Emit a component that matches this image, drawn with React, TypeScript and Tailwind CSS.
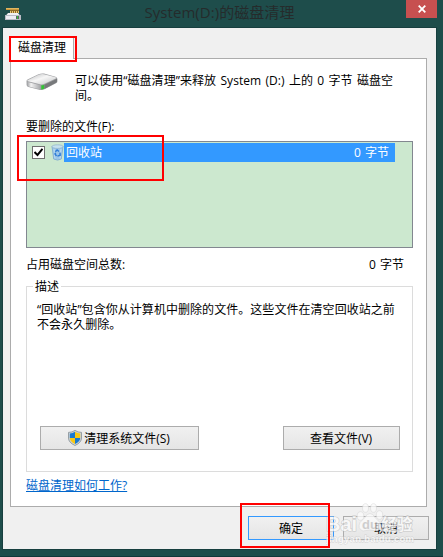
import React from 'react';

const yahei = 'font-["Open_Sans","Noto_Sans_CJK_SC",sans-serif]';

function CleanupIcon() {
  return (
    <svg viewBox="0 0 16 12" className="block h-[12px] w-[16px]">
      <path d="M1 0h13v2H1z" fill="#c9973c" />
      <path d="M1 0h13v1H1z" fill="#e0b660" />
      <path d="M5 2h9v3H5z" fill="#8d6a27" />
      <path d="M5.500 3v2M7.500 3v2M9.500 3v2M11.500 3v2M13.500 3v2" stroke="#ecc872" strokeWidth="1" />
      <path d="M3 5h10l2.500 3H.500z" fill="#f1f1f3" />
      <path d="M0 7h16v5H0z" fill="#b9bbc4" />
      <path d="M1 8h10v3H1z" fill="#ededf3" />
      <path d="M11 8h3v3h-3z" fill="#5d6266" />
      <path d="M12 8h1v3h-1z" fill="#35c23a" />
    </svg>
  );
}

function DriveIcon() {
  return (
    <svg viewBox="0 0 32 18" className="block h-[18px] w-[32px]">
      <defs>
        <linearGradient id="top" x1="0" y1="0" x2="1" y2="1">
          <stop offset="0" stopColor="#b9babc" />
          <stop offset=".45" stopColor="#f6f6f6" />
          <stop offset="1" stopColor="#c5c6c8" />
        </linearGradient>
        <linearGradient id="front" x1="0" y1="0" x2="1" y2="0">
          <stop offset="0" stopColor="#9c9da0" />
          <stop offset=".3" stopColor="#f2f2f2" />
          <stop offset="1" stopColor="#a5a6a9" />
        </linearGradient>
      </defs>
      <path d="M.5 8Q.500 7 2 6.300L12.500 1.300Q15 .2 18 .6l11.500 3.100Q31.500 4.400 31.400 6v2.500q0 1-1.400 1.700L18.500 16.200Q16.500 17.300 14 16.900L2.500 14Q.6 13.400.6 12z" fill="#a0a1a4" />
      <path d="M1.500 7.200 12.500 1.800Q15 .8 18 1.200l11.500 3q1.400.5.3 1.200L18.500 10.800Q16.500 11.800 14 11.200L2 8.300Q.800 7.800 1.500 7.200z" fill="url(#top)" />
      <path d="M1 8.600q.5.500 1.500.7l12 2.900V16.500L2.600 13.500Q1 13 1 12z" fill="url(#front)" />
      <path d="M18.300 11.800 31 5.700v2.900q0 .6-1 1.200L18.300 15.900z" fill="#77797b" />
      <path d="M15.300 12.200q1.600 0 2.900-.5v4.100q-1.200.7-2.900.6z" fill="#32c433" />
    </svg>
  );
}

function BinIcon() {
  return (
    <svg viewBox="0 0 13 17" className="block h-[17px] w-[13px]">
      <path d="M1 2.500 2.700 15q3.800 2.200 7.600 0L12 2.500z" fill="#9cc6e8" stroke="#7aa8d0" strokeWidth=".8" />
      <path d="m3 5 1 9.500M10 5 9 14.500" stroke="#c4e1f3" strokeWidth=".9" />
      <ellipse cx="6.5" cy="2.600" rx="5.600" ry="1.800" fill="#c6e2ef" stroke="#8fb0c9" strokeWidth=".7" />
      <path d="m4.300 7.800 1.800-1.800L8 7.500M9 8.600l.2 2.600-2.800.9M5.500 12 4 10l.6-1.300" fill="none" stroke="#2f7cd6" strokeWidth="1.500" />
    </svg>
  );
}

function ShieldIcon() {
  return (
    <svg viewBox="0 0 14 16" className="block h-[16px] w-[14px]">
      <path d="M7 .4Q10 2.500 13.500 2.400V8q0 4.500-6.500 7.500Q.5 12.500.5 8V2.400Q4 2.500 7 .4z" fill="#cfd5d8" stroke="#838d94" strokeWidth=".8" />
      <path d="M7 1.800Q4.800 3.400 1.800 3.400V8H7z" fill="#1979cf" />
      <path d="M7 1.800Q9.200 3.400 12.200 3.400V8H7z" fill="#f9c812" />
      <path d="M1.800 8H7v6.100Q1.800 11.500 1.800 8z" fill="#f9c812" />
      <path d="M12.200 8H7v6.100Q12.200 11.500 12.200 8z" fill="#1979cf" />
    </svg>
  );
}

interface DialogButtonProps {
  className: string;
  children: React.ReactNode;
}

function DialogButton({ className, children }: DialogButtonProps) {
  return (
    <button
      className={`flex h-6 items-center justify-center border bg-gradient-to-b from-[#f0f0f0] to-[#e5e5e5] ${className}`}
    >
      {children}
    </button>
  );
}

function Watermark() {
  return (
    <div className="pointer-events-none absolute left-[326px] top-[503px] z-10 h-[43px] w-[90px] opacity-75">
      <svg viewBox="0 0 90 43" className="block h-[43px] w-[90px] fill-[#fbfbfb] font-['Liberation_Sans','Noto_Sans_CJK_SC',sans-serif] font-bold">
        <g stroke="#d2d2d2" strokeWidth=".6">
          <ellipse cx="34.500" cy="13" rx="3.300" ry="4.300" />
          <ellipse cx="39.500" cy="5" rx="3" ry="4.300" />
          <ellipse cx="47.500" cy="5" rx="3" ry="4.300" />
          <ellipse cx="53.500" cy="12" rx="3.200" ry="4.300" />
          <path d="M44 10.500q3 0 5 4l5 5q3 6-3 8.500-7-2-14 0-6-2.500-3-8.500l5-5q2-4 5-4z" />
        </g>
        <text x="0" y="27.500" fontSize="21" textLength="31" lengthAdjust="spacingAndGlyphs" stroke="#bdbdbd" strokeWidth="1.200" paintOrder="stroke">Bai</text>
        <text x="36" y="26" fontSize="13" fill="#c4c4c4">du</text>
        <text x="55.500" y="27" fontSize="15.500" textLength="31" stroke="#bdbdbd" strokeWidth="1.200" paintOrder="stroke">经验</text>
        <text x="0" y="38.500" fontSize="9.500" textLength="88" stroke="#c8c8c8" strokeWidth=".8" paintOrder="stroke">jingyan.baidu.com</text>
      </svg>
    </div>
  );
}

export default function App() {
  return (
    <div className={`relative h-[557px] w-[443px] overflow-hidden border-b border-[#12383a] bg-[#1e4d4b] text-xs leading-[15px] text-black ${yahei}`}>
      {/* Title bar */}
      <header className="flex h-7 items-start">
        <div className="w-[108px] pl-[5px] pt-[8px]">
          <CleanupIcon />
        </div>
        <h1 className="w-[223px] whitespace-nowrap text-center text-[15px] leading-[25px] tracking-[0.06px] text-[#252b2b]">
          System(D:)的磁盘清理
        </h1>
        <button aria-label="Close" className="ml-[75px] flex h-[18px] w-[31px] items-center justify-center bg-[#c75050]">
          <svg viewBox="0 0 8 8" className="h-2 w-2">
            <path d="m.7.700 6.600 6.600m0-6.600L.7 7.300" stroke="white" strokeWidth="1.800" />
          </svg>
        </button>
      </header>

      {/* Dialog body */}
      <main className="ml-[3px] flex h-[521px] w-[433px] flex-col bg-[#f0f0f0] pl-[7px] pt-[9px] outline outline-[#173f3f]">
        <div className="z-10 -mb-px flex h-[22px] w-[64px] items-center border border-b-0 border-[#acacac] bg-white pb-[2px] pl-[7px]">
          磁盘清理
        </div>
        <section className="flex h-[449px] w-[417px] flex-col border border-[#acacac] bg-white px-[15px]">
          <div className="flex h-[60px] pt-[14px]">
            <div className="w-[49px]">
              <DriveIcon />
            </div>
            <p className="whitespace-nowrap tracking-[0.06px] [word-spacing:1.1px]">
              可以使用“磁盘清理”来释放 System (D:) 上的 0 字节 磁盘空<br />间。
            </p>
          </div>
          <p className="h-[22px]">要删除的文件(F):</p>

          <div className="h-[107px] w-[387px] border border-[#828790] bg-[#cce8cf] pt-px">
            <div className="flex h-[19px] w-[368px] items-center">
              <div className="ml-[5px] flex h-[13px] w-[13px] items-center justify-center border border-[#707070] bg-white">
                <svg viewBox="0 0 9 9" className="h-[9px] w-[9px]">
                  <path d="m.5 4 3 3L8.500.800" fill="none" stroke="black" strokeWidth="2" />
                </svg>
              </div>
              <div className="ml-[6px]"><BinIcon /></div>
              <div className="flex h-full flex-1 items-center justify-between bg-[#3399ff] pl-[2px] pr-[6px] text-white">
                <span>回收站</span>
                <span className="[word-spacing:1px]">0 字节</span>
              </div>
            </div>
          </div>

          <div className="flex justify-between pr-[7px] pt-[9px]">
            <span>占用磁盘空间总数:</span>
            <span className="[word-spacing:1px]">0 字节</span>
          </div>

          <fieldset className="mt-[7px] h-[193px] w-[387px] border border-[#dcdcdc]">
            <legend className="ml-[6px] px-[2px]">描述</legend>
            <p className="h-[132px] whitespace-nowrap pl-[10px] pt-[8px] tracking-[0.05px]">
              “回收站”包含你从计算机中删除的文件。这些文件在清空回收站之前<br />不会永久删除。
            </p>
            <div className="flex justify-between pl-[13px] pr-[12px]">
              <DialogButton className="w-[159px] gap-[2px] border-[#acacac] pr-[1px]">
                <ShieldIcon />
                清理系统文件(S)
              </DialogButton>
              <DialogButton className="w-[117px] border-[#acacac] pr-[1px]">查看文件(V)</DialogButton>
            </div>
          </fieldset>
          <a href="#" className="mt-[6px] w-fit text-[#0066cc] underline">磁盘清理如何工作?</a>
        </section>
        <div className="mt-[9px] flex gap-[9px] pl-[238px]">
          <DialogButton className="w-[86px] border-[#3399ff]">确定</DialogButton>
          <DialogButton className="w-[86px] border-[#acacac]">取消</DialogButton>
        </div>
      </main>

      <Watermark />

      {/* Highlighted steps */}
      <div className="absolute left-[9px] top-[36px] z-20 h-[26px] w-[68px] border-2 border-[#ff0000]" />
      <div className="absolute left-[17px] top-[135px] z-20 h-[46px] w-[147px] border-2 border-[#ff0000]" />
      <div className="absolute left-[240px] top-[503px] z-20 h-[45px] w-[90px] border-2 border-[#ff0000]" />
    </div>
  );
}
